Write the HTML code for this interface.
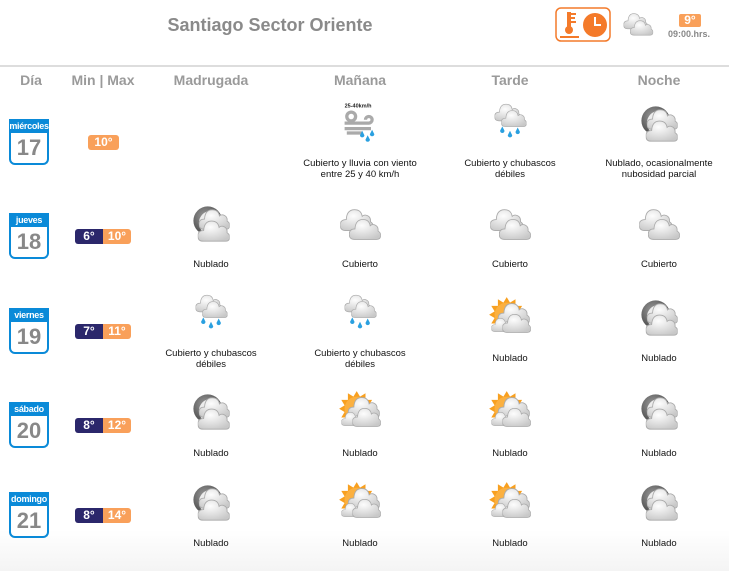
<!DOCTYPE html>
<html><head><meta charset="utf-8">
<style>
*{margin:0;padding:0;box-sizing:border-box}
body{width:729px;height:571px;position:relative;overflow:hidden;font-family:"Liberation Sans",Arial,sans-serif;background:linear-gradient(#fff 0,#fff 530px,#f4f4f4 571px)}
.a{position:absolute}
.title{left:0;width:540px;top:15px;text-align:center;font-size:18px;font-weight:bold;color:#8a8a8a}
.hr{left:0;top:65px;width:729px;height:2px;background:#ddd}
.hd{top:72px;font-size:14px;font-weight:bold;color:#9a9a9a;text-align:center;width:120px;margin-left:-60px}
.cal{left:9px;width:40px;height:46px;border:2px solid #0a8ad8;border-top:none;border-radius:0 0 6px 6px;background:#fff}
.cal .h{background:#0a8ad8;color:#fff;font-size:9px;font-weight:bold;text-align:center;height:14px;line-height:14px;margin:0 -2px;letter-spacing:-.3px}
.cal .n{font-size:22px;font-weight:bold;color:#888;text-align:center;line-height:29px}
.tp{height:15px;font-size:12px;font-weight:bold;color:#fff;line-height:15px;text-align:center}
.mn{left:75px;width:28px;background:#2b276b;border-radius:3px 0 0 3px}
.mx{left:103px;width:28px;background:#f9a05a;border-radius:0 3px 3px 0}
.tx{font-size:9.5px;color:#111;text-align:center;width:150px;margin-left:-75px;line-height:11px}
.ic{width:44px;height:44px;margin-left:-22px;margin-top:-22px}
</style></head><body>
<svg width="0" height="0" style="position:absolute">
<defs>
<radialGradient id="cg" cx="40%" cy="30%" r="75%"><stop offset="0" stop-color="#fdfdfd"/><stop offset="1" stop-color="#c8c8c8"/></radialGradient>
<radialGradient id="mg" cx="40%" cy="35%" r="65%"><stop offset="0" stop-color="#9a9a9a"/><stop offset="1" stop-color="#4a4a4a"/></radialGradient>
<symbol id="cl" viewBox="0 0 30 22"><path d="M5 21 Q0 21 0 16 Q0 11 5.5 11 Q6 2 13 2 Q19 2 20 8 Q22 6 25 7.5 Q28 9 27.5 13 Q30 14.5 30 17 Q30 21 26 21 Z" fill="url(#cg)" stroke="#aaa" stroke-width=".8"/></symbol>
<symbol id="moon" viewBox="0 0 40 40"><circle cx="17" cy="17" r="13" fill="url(#mg)"/><circle cx="20" cy="19" r="11" fill="#ececec"/><use href="#cl" x="9" y="5" width="28" height="21"/><use href="#cl" x="8" y="15" width="29" height="22"/></symbol>
<symbol id="cld" viewBox="0 0 40 40"><use href="#cl" x="2" y="5" width="30" height="22"/><use href="#cl" x="10" y="14" width="29" height="21"/></symbol>
<symbol id="shw" viewBox="0 0 40 40"><use href="#cl" x="6" y="2" width="24" height="18"/><use href="#cl" x="12" y="8" width="23" height="17"/><g fill="#2aa0e0"><path d="M13 24 l-2 4 a2 2 0 1 0 4 0z"/><path d="M20 28 l-2 4 a2 2 0 1 0 4 0z"/><path d="M27 25 l-2 4 a2 2 0 1 0 4 0z"/></g></symbol>
<symbol id="sun" viewBox="0 0 40 40"><g transform="translate(17 17)"><polygon fill="#f8a020" points="0,-16 3,-11 8,-14 8,-8 14,-8 11,-3 16,0 11,3 14,8 8,8 8,14 3,11 0,16 -3,11 -8,14 -8,8 -14,8 -11,3 -16,0 -11,-3 -14,-8 -8,-8 -8,-14 -3,-11"/><circle r="11" fill="#fbb040"/></g><use href="#cl" x="9" y="5" width="29" height="21"/><use href="#cl" x="3" y="19" width="19" height="14"/><use href="#cl" x="13" y="15" width="26" height="19"/></symbol>
<symbol id="wnd" viewBox="0 0 40 40"><text x="6" y="7" font-size="5" font-family="Liberation Sans" font-weight="bold" fill="#222">25-40km/h</text><g fill="none" stroke="#aaa" stroke-width="3"><circle cx="12" cy="15" r="4"/><path d="M6 21 H28 a3 3 0 1 0 -3 -3"/><path d="M6 26 H30"/><path d="M8 30 H22"/></g><g fill="#2aa0e0"><path d="M22 28 l-2 4 a2 2 0 1 0 4 0z"/><path d="M27 32 l-2 4 a2 2 0 1 0 4 0z"/><path d="M31 27 l-2 4 a2 2 0 1 0 4 0z"/></g></symbol>
</defs></svg>

<div class="a title">Santiago Sector Oriente</div>
<svg class="a" style="left:555px;top:7px" width="56" height="35" viewBox="0 0 56 35"><rect x="1" y="1" width="54" height="33" rx="5" fill="#fff" stroke="#f47a2a" stroke-width="1.5"/><g fill="#f47a2a"><rect x="12" y="5" width="4" height="17"/><rect x="16" y="6" width="5" height="2"/><rect x="16" y="10" width="4" height="2"/><rect x="16" y="14" width="5" height="2"/><circle cx="14" cy="23" r="4"/><rect x="5" y="29" width="19" height="2"/><circle cx="40" cy="18" r="12"/></g><path d="M40 10 V18 H46" stroke="#fff" stroke-width="2" fill="none"/></svg>
<svg class="a" style="left:622px;top:8px" width="32" height="32"><use href="#cld" width="32" height="32"/></svg>
<div class="a tp" style="left:679px;top:14px;width:22px;background:#f9a05a;border-radius:2px;height:13px;line-height:13px">9°</div>
<div class="a" style="left:668px;top:29px;font-size:9px;font-weight:bold;color:#888">09:00.hrs.</div>
<div class="a hr"></div>

<div class="a hd" style="left:31px">Día</div>
<div class="a hd" style="left:103px">Min | Max</div>
<div class="a hd" style="left:211px">Madrugada</div>
<div class="a hd" style="left:360px">Mañana</div>
<div class="a hd" style="left:510px">Tarde</div>
<div class="a hd" style="left:659px">Noche</div>

<div class="a cal" style="top:119px"><div class="h">miércoles</div><div class="n">17</div></div>
<div class="a tp" style="left:88px;top:135px;width:31px;background:#f9a05a;border-radius:3px">10°</div>
<svg class="a ic" style="left:360px;top:122px"><use href="#wnd" width="44" height="44"/></svg>
<svg class="a ic" style="left:510px;top:122px"><use href="#shw" width="44" height="44"/></svg>
<svg class="a ic" style="left:659px;top:124px"><use href="#moon" width="44" height="44"/></svg>
<div class="a tx" style="left:360px;top:158px">Cubierto y lluvia con viento<br>entre 25 y 40 km/h</div>
<div class="a tx" style="left:510px;top:158px">Cubierto y chubascos<br>débiles</div>
<div class="a tx" style="left:659px;top:158px">Nublado, ocasionalmente<br>nubosidad parcial</div>

<div class="a cal" style="top:213px"><div class="h">jueves</div><div class="n">18</div></div>
<div class="a tp mn" style="top:229px">6°</div><div class="a tp mx" style="top:229px">10°</div>
<svg class="a ic" style="left:211px;top:224px"><use href="#moon" width="44" height="44"/></svg>
<svg class="a ic" style="left:360px;top:224px"><use href="#cld" width="44" height="44"/></svg>
<svg class="a ic" style="left:510px;top:224px"><use href="#cld" width="44" height="44"/></svg>
<svg class="a ic" style="left:659px;top:224px"><use href="#cld" width="44" height="44"/></svg>
<div class="a tx" style="left:211px;top:259px">Nublado</div>
<div class="a tx" style="left:360px;top:259px">Cubierto</div>
<div class="a tx" style="left:510px;top:259px">Cubierto</div>
<div class="a tx" style="left:659px;top:259px">Cubierto</div>

<div class="a cal" style="top:308px"><div class="h">viernes</div><div class="n">19</div></div>
<div class="a tp mn" style="top:324px">7°</div><div class="a tp mx" style="top:324px">11°</div>
<svg class="a ic" style="left:211px;top:313px"><use href="#shw" width="44" height="44"/></svg>
<svg class="a ic" style="left:360px;top:313px"><use href="#shw" width="44" height="44"/></svg>
<svg class="a ic" style="left:510px;top:318px"><use href="#sun" width="44" height="44"/></svg>
<svg class="a ic" style="left:659px;top:318px"><use href="#moon" width="44" height="44"/></svg>
<div class="a tx" style="left:211px;top:348px">Cubierto y chubascos<br>débiles</div>
<div class="a tx" style="left:360px;top:348px">Cubierto y chubascos<br>débiles</div>
<div class="a tx" style="left:510px;top:353px">Nublado</div>
<div class="a tx" style="left:659px;top:353px">Nublado</div>

<div class="a cal" style="top:402px"><div class="h">sábado</div><div class="n">20</div></div>
<div class="a tp mn" style="top:418px">8°</div><div class="a tp mx" style="top:418px">12°</div>
<svg class="a ic" style="left:211px;top:412px"><use href="#moon" width="44" height="44"/></svg>
<svg class="a ic" style="left:360px;top:412px"><use href="#sun" width="44" height="44"/></svg>
<svg class="a ic" style="left:510px;top:412px"><use href="#sun" width="44" height="44"/></svg>
<svg class="a ic" style="left:659px;top:412px"><use href="#moon" width="44" height="44"/></svg>
<div class="a tx" style="left:211px;top:448px">Nublado</div>
<div class="a tx" style="left:360px;top:448px">Nublado</div>
<div class="a tx" style="left:510px;top:448px">Nublado</div>
<div class="a tx" style="left:659px;top:448px">Nublado</div>

<div class="a cal" style="top:492px"><div class="h">domingo</div><div class="n">21</div></div>
<div class="a tp mn" style="top:508px">8°</div><div class="a tp mx" style="top:508px">14°</div>
<svg class="a ic" style="left:211px;top:503px"><use href="#moon" width="44" height="44"/></svg>
<svg class="a ic" style="left:360px;top:503px"><use href="#sun" width="44" height="44"/></svg>
<svg class="a ic" style="left:510px;top:503px"><use href="#sun" width="44" height="44"/></svg>
<svg class="a ic" style="left:659px;top:503px"><use href="#moon" width="44" height="44"/></svg>
<div class="a tx" style="left:211px;top:538px">Nublado</div>
<div class="a tx" style="left:360px;top:538px">Nublado</div>
<div class="a tx" style="left:510px;top:538px">Nublado</div>
<div class="a tx" style="left:659px;top:538px">Nublado</div>
</body></html>
